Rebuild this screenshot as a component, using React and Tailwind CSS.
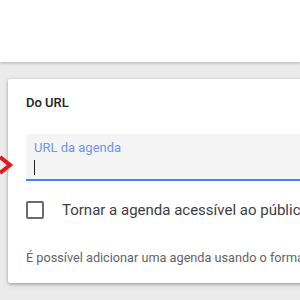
export default function App() {
  return (
    <div className="w-[300px] h-[300px] overflow-hidden relative bg-[#ebebeb] font-['Roboto',sans-serif]">
      <div className="h-[62px] bg-white shadow-[0_1px_3px_rgba(0,0,0,0.25)] relative z-10"></div>

      <div className="ml-[8px] mt-[17px] w-[320px] h-[204px] bg-white rounded-[2px] shadow-[0_1px_3px_rgba(0,0,0,0.3),0_2px_6px_rgba(0,0,0,0.1)] pl-[18px]">
        <div className="pt-[15px] text-[13px] leading-[18px] font-medium text-[#202124]">Do URL</div>

        <div className="mt-[22px] h-[47px] bg-[#f4f4f4] rounded-t-[4px] border-b-2 border-[#4285f4] pl-[8px] pt-[6px]">
          <div className="text-[13px] leading-[16px] text-[#6d97f1]">URL da agenda</div>
          <div className="mt-[4px] w-px h-[15px] bg-[#202124]"></div>
        </div>

        <div className="mt-[19px] flex items-center">
          <div className="w-[18px] h-[18px] border-2 border-[#6b6b6b] rounded-[2px]"></div>
          <span className="ml-[18px] text-[15px] leading-[20px] text-[#3c4043] whitespace-nowrap">Tornar a agenda acessível ao público</span>
        </div>

        <div className="mt-[30px] text-[12.7px] leading-[16px] text-[#5f6368] whitespace-nowrap">
          É possível adicionar uma agenda usando o formato iCal
        </div>
      </div>

      <svg className="absolute left-0 top-[155px]" width="14" height="20" viewBox="0 0 14 20">
        <path d="M0 2 L10 10 L0 18" fill="none" stroke="#e8141c" strokeWidth="4" strokeLinejoin="miter" />
      </svg>
    </div>
  );
}
